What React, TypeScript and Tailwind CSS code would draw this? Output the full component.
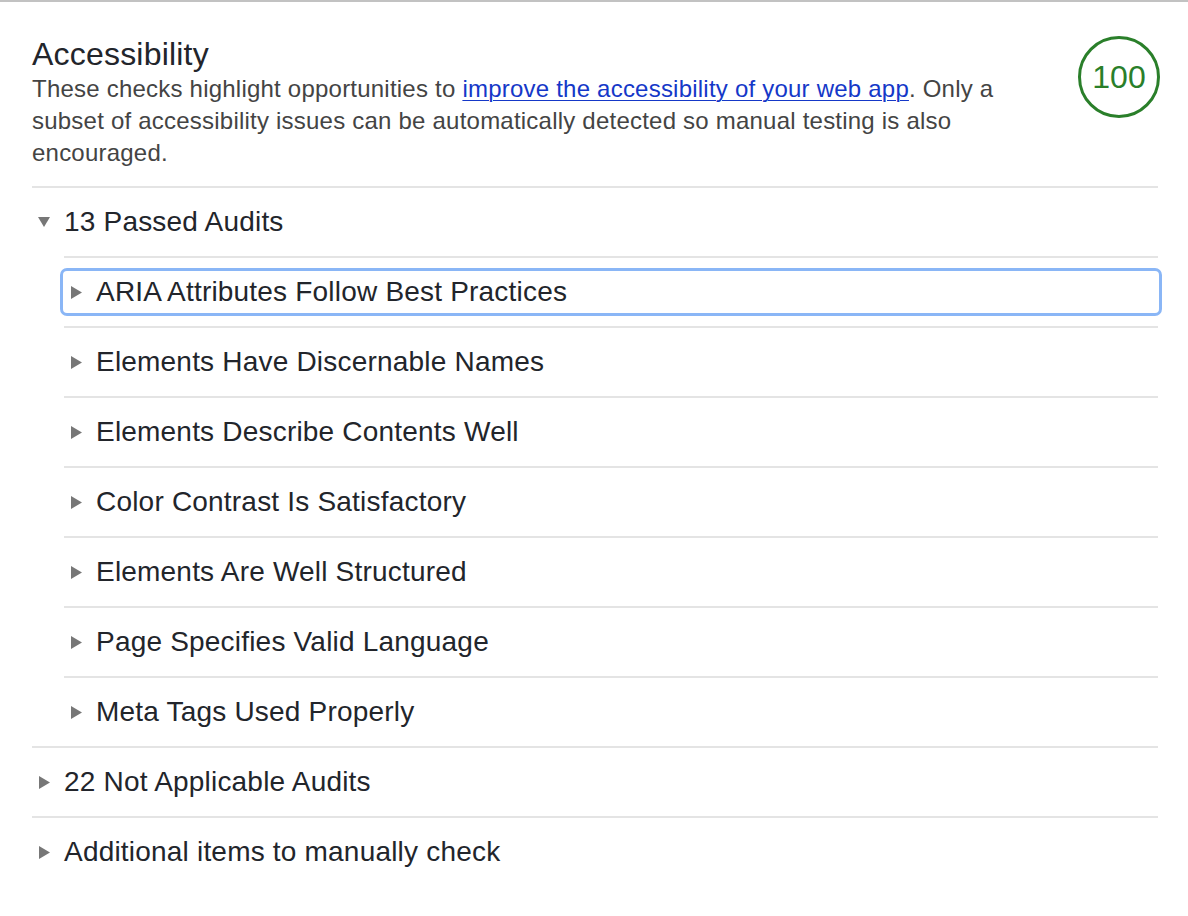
import React from 'react';

const passed = [
  'ARIA Attributes Follow Best Practices',
  'Elements Have Discernable Names',
  'Elements Describe Contents Well',
  'Color Contrast Is Satisfactory',
  'Elements Are Well Structured',
  'Page Specifies Valid Language',
  'Meta Tags Used Properly',
];

function Arrow({ open }: { open?: boolean }) {
  return (
    <span className="w-[12px] h-[14px] flex items-center justify-center shrink-0">
      {open ? (
        <svg width="12" height="10" viewBox="0 0 12 10">
          <polygon points="0,0 12,0 6,10" fill="#777777" />
        </svg>
      ) : (
        <svg width="11" height="13" viewBox="0 0 11 13">
          <polygon points="0,0 11,6.5 0,13" fill="#777777" />
        </svg>
      )}
    </span>
  );
}

function Summary({ label, open, focused }: { label: string; open?: boolean; focused?: boolean }) {
  return (
    <div className="py-[14px]">
      <div
        className={`h-[40px] flex items-center gap-[14px] pl-[6px] rounded-[3px] text-[28px] tracking-[0.2px] text-[#22252b] ${
          focused ? 'outline-[3px] outline-solid outline-[#8ab6f6] outline-offset-[1px]' : ''
        }`}
      >
        <Arrow open={open} />
        <span>{label}</span>
      </div>
    </div>
  );
}

export default function App() {
  return (
    <div
      className="min-h-[916px] bg-white border-t-2 border-[#c2c2c2] pl-[32px] pr-[30px]"
      style={{ fontFamily: '"Liberation Sans", Arial, sans-serif' }}
    >
      {/* Category header */}
      <div className="flex justify-between items-start pt-[33px] pb-[17px]">
        <div className="w-[1008px]">
          <h2 className="text-[32px] leading-[38px] tracking-[0.2px] text-[#22252b]">Accessibility</h2>
          <p className="text-[24px] leading-[32px] tracking-[0.22px] text-[#444444]">
            <span>These checks highlight opportunities to </span>
            <a href="#" className="text-[#1538c8] underline underline-offset-[3px] decoration-1">
              improve the accessibility of your web app
            </a>
            <span>. Only a subset of accessibility issues can be automatically detected so manual testing is also encouraged.</span>
          </p>
        </div>
        <div className="w-[82px] h-[82px] rounded-full border-[3px] border-[#2a7f2a] flex items-center justify-center text-[32px] text-[#2a7f2a] mt-[1px] mr-[-2px]">
          100
        </div>
      </div>

      {/* Passed audits */}
      <div className="border-t-2 border-[#e4e4e4]">
        <Summary label="13 Passed Audits" open />
        <div className="ml-[32px]">
          {passed.map((title, i) => (
            <div key={title} className="border-t-2 border-[#e4e4e4]">
              <Summary label={title} focused={i === 0} />
            </div>
          ))}
        </div>
      </div>

      <div className="border-t-2 border-[#e4e4e4]">
        <Summary label="22 Not Applicable Audits" />
      </div>

      <div className="border-t-2 border-[#e4e4e4]">
        <Summary label="Additional items to manually check" />
      </div>
    </div>
  );
}
